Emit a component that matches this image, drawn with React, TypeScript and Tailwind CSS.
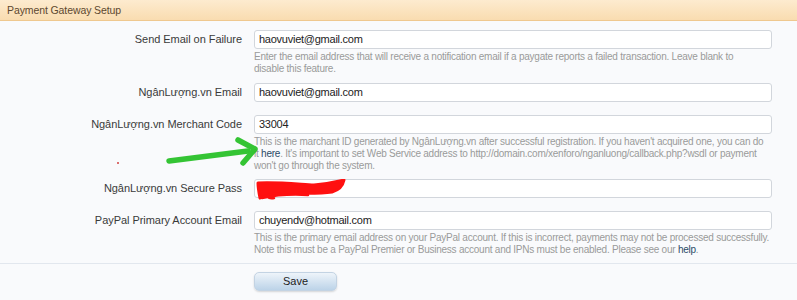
import React from "react";

const font = { fontFamily: '"Liberation Sans", Arial, sans-serif' };

function Row({
  label,
  value,
  className,
  children,
}: {
  label: string;
  value?: string;
  className?: string;
  children?: React.ReactNode;
}) {
  return (
    <div className={`flex items-start ${className ?? ""}`}>
      <div className="w-[242px] shrink-0 text-right text-[11px] leading-[19px] tracking-[-0.05px] text-[#3a3a3a]">{label}</div>
      <div className="ml-[12px] w-[518px] shrink-0">
        <div className="h-[19px] rounded-[3px] border border-[#d2d6dc] bg-white px-[4px] text-[11px] leading-[17px] tracking-[-0.25px] text-[#222]">
          {value}
        </div>
        {children && (
          <div className="mt-[2px] whitespace-nowrap text-[10px] leading-[12px] tracking-[-0.24px] text-[#9a9a9a]">{children}</div>
        )}
      </div>
    </div>
  );
}

export default function App() {
  return (
    <div className="relative h-[300px] w-[797px] overflow-hidden bg-[#f9fafc]" style={font}>
      <div className="h-[21px] border-b border-[#efc88f] bg-gradient-to-b from-[#fdebcf] to-[#f9dcb0] pl-[7px] text-[10.5px] leading-[20px] tracking-[-0.1px] text-[#5d4830]">
        Payment Gateway Setup
      </div>

      <div className="pt-[9px]">
        <Row label="Send Email on Failure" value="haovuviet@gmail.com" className="mb-[8px]">
          Enter the email address that will receive a notification email if a paygate reports a failed transaction. Leave blank to
          <br />
          disable this feature.
        </Row>
        <Row label="NgânLượng.vn Email" value="haovuviet@gmail.com" className="mb-[13px]" />
        <Row label="NgânLượng.vn Merchant Code" value="33004" className="mb-[7px]">
          This is the marchant ID generated by NgânLượng.vn after successful registration. If you haven't acquired one, you can do
          <br />
          it <span className="text-[#2b4a66]">here</span>. It's important to set Web Service address to
          http://domain.com/xenforo/nganluong/callback.php?wsdl or payment
          <br />
          won't go through the system.
        </Row>
        <Row label="NgânLượng.vn Secure Pass" value="" className="mb-[13px]" />
        <Row label="PayPal Primary Account Email" value="chuyendv@hotmail.com" className="mb-[7px]">
          This is the primary email address on your PayPal account. If this is incorrect, payments may not be processed successfully.
          <br />
          Note this must be a PayPal Premier or Business account and IPNs must be enabled. Please see our{" "}
          <span className="text-[#2b4a66]">help</span>.
        </Row>
        <div className="border-t border-[#e2e7ee]" />
        <div className="pl-[254px] pt-[4px]">
          <button className="h-[19px] w-[83px] rounded-[5px] border border-[#c3d3e3] bg-gradient-to-b from-[#eef4fa] to-[#bcd3e8] text-[11px] leading-[17px] text-[#222] shadow-[0_1px_2px_rgba(0,0,0,0.15)]">
            Save
          </button>
        </div>
      </div>

      {/* green arrow annotation */}
      <svg className="absolute left-[160px] top-[134px]" width="110" height="38" viewBox="0 0 110 38">
        <g stroke="#1fbf1f" strokeWidth="5.5" strokeLinecap="round" strokeLinejoin="round" fill="none" opacity="0.9">
          <path d="M9 27 L88 17" />
          <path d="M78 6 L95 15 L83 29" />
        </g>
      </svg>

      {/* red scribble over password */}
      <svg className="absolute left-[256px] top-[179px]" width="92" height="22" viewBox="0 0 92 22">
        <g stroke="#ff1010" strokeLinecap="round" strokeLinejoin="round" fill="#ff1010">
          <path d="M2 4 C20 3 40 5 58 6 C70 5 80 3 88 1 C87 6 83 11 76 13 C62 15 45 14 30 14 C18 15 10 16 4 19 C3 14 2 9 2 4 Z" strokeWidth="3" />
          <path d="M6 19 C20 16 36 15 52 16 M12 16 C10 18 14 20 18 19" strokeWidth="2.5" fill="none" />
        </g>
      </svg>

      <div className="absolute left-[117px] top-[162px] h-[2px] w-[2px] rounded-full bg-[#d04040]" />
    </div>
  );
}
